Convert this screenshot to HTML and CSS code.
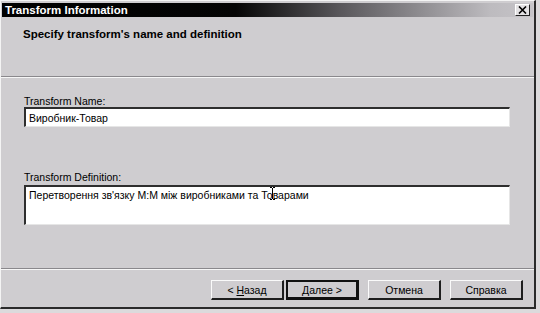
FILE: index.html
```html
<!DOCTYPE html>
<html lang="uk">
<head>
  <meta charset="UTF-8" />
  <title>Transform Information</title>
  <link rel="stylesheet" href="styles.css">
</head>
<body>
  <div class="window">
    <!-- Title bar -->
    <div class="titlebar">
      <span class="title">Transform Information</span>
      <span class="close-btn">
        <svg width="9" height="8" viewBox="0 0 9 8">
          <path d="M1 0.5l7 7M8 0.5l-7 7" stroke="#000" stroke-width="1.6" fill="none"/>
        </svg>
      </span>
    </div>

    <!-- Wizard header -->
    <div class="header">
      <h1>Specify transform's name and definition</h1>
    </div>

    <!-- Fields -->
    <div class="content">
      <label class="field-label name-label" for="tname">Transform Name:</label>
      <input class="field" id="tname" type="text" value="Виробник-Товар">

      <label class="field-label def-label" for="tdef">Transform Definition:</label>
      <div class="area-wrap">
        <textarea class="field area" id="tdef">Перетворення зв'язку М:М між виробниками та Товарами</textarea>
        <svg class="ibeam" width="7" height="13" viewBox="0 0 7 13">
          <path d="M1 0.5h2M4 0.5h2M3.5 1v11M1 12.5h2M4 12.5h2" stroke="#000" stroke-width="1" fill="none"/>
        </svg>
      </div>
    </div>

    <!-- Buttons -->
    <div class="footer">
      <div class="btn-group">
        <button class="btn">&lt; <u>Н</u>азад</button>
        <button class="btn btn-default">Далее &gt;</button>
      </div>
      <button class="btn">Отмена</button>
      <button class="btn">Справка</button>
    </div>
  </div>
</body>
</html>
```

FILE: styles.css
```css
/* RESET */
* { box-sizing: border-box; margin: 0; padding: 0; }
body {
  background: #dcdadc;
  font-family: 'Liberation Sans', Arial, sans-serif;
  font-size: 10.5px;
  color: #000;
}

/* WINDOW FRAME */
.window {
  width: 536px;
  height: 309px;
  background: #cfcdd0;
  border-top: 1px solid #f4f4f4;
  border-left: 1px solid #f4f4f4;
  border-right: 2px solid #2a2a2a;
  border-bottom: 2px solid #2a2a2a;
  display: flex;
  flex-direction: column;
}

/* TITLE BAR */
.titlebar {
  margin: 2px 1px 0 1px;
  height: 14px;
  background: linear-gradient(to right, #000 0%, #050505 44%, #5a585c 64%, #bdbbbf 92%, #c6c4c8 100%);
  display: flex;
  align-items: center;
  justify-content: space-between;
  padding: 0 3px 0 3px;
}
.title {
  color: #fff;
  font-weight: bold;
  font-size: 11.5px;
  line-height: 14px;
}
.close-btn {
  width: 15px;
  height: 12px;
  background: #e4e2e4;
  border-top: 1px solid #fff;
  border-left: 1px solid #fff;
  border-right: 1px solid #222;
  border-bottom: 1px solid #222;
  display: flex;
  align-items: center;
  justify-content: center;
}

/* HEADER */
.header {
  height: 60px;
  padding: 11px 0 0 22px;
  border-bottom: 1px solid #8a888c;
  box-shadow: 0 1px 0 #f6f6f6;
}
.header h1 {
  font-size: 11.5px;
  font-weight: bold;
  line-height: 13px;
}

/* CONTENT */
.content {
  flex: 1;
  padding: 18px 0 0 23px;
  display: flex;
  flex-direction: column;
  border-bottom: 1px solid #8a888c;
  box-shadow: 0 1px 0 #f6f6f6;
}
.field-label {
  line-height: 12px;
  display: block;
}
.name-label { margin-bottom: 0; }
.def-label { margin-top: 44px; margin-bottom: 2px; }

.field {
  width: 486px;
  font-family: 'Liberation Sans', Arial, sans-serif;
  font-size: 10.5px;
  color: #000;
  background: #fff;
  border-top: 2px solid #2e2e2e;
  border-left: 2px solid #2e2e2e;
  border-right: 1px solid #e6e6e6;
  border-bottom: 1px solid #e6e6e6;
  outline: none;
}
input.field {
  height: 20px;
  padding: 0 3px;
}
.area-wrap { position: relative; width: 486px; }
.area {
  display: block;
  height: 40px;
  padding: 2px 3px;
  line-height: 13px;
  resize: none;
  overflow: hidden;
}
.ibeam {
  position: absolute;
  left: 245px;
  top: 2px;
}

/* FOOTER BUTTONS */
.footer {
  height: 38px;
  padding: 11px 11px 0 0;
  display: flex;
  justify-content: flex-end;
  align-items: flex-start;
  gap: 9px;
}
.btn-group { display: flex; gap: 2px; }
.btn {
  width: 73px;
  height: 20px;
  background: #cfcdd0;
  font-family: 'Liberation Sans', Arial, sans-serif;
  font-size: 10.5px;
  color: #000;
  border-top: 1px solid #fafafa;
  border-left: 1px solid #fafafa;
  border-right: 2px solid #1e1e1e;
  border-bottom: 2px solid #1e1e1e;
}
.btn u { text-decoration: underline; }
.btn-default {
  border: 2px solid #111;
  border-right-width: 3px;
  border-bottom-width: 3px;
}
```
